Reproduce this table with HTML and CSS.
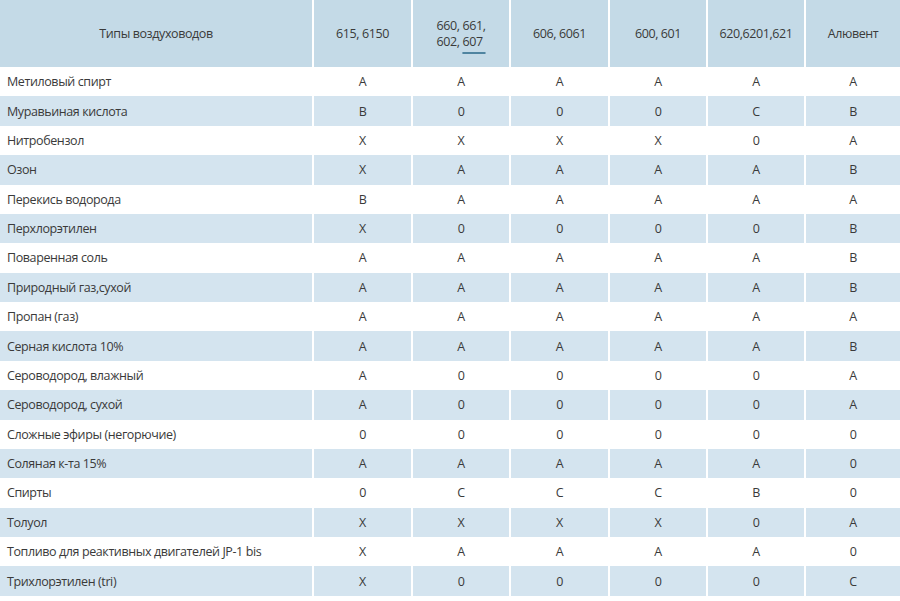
FILE: index.html
```html
<!DOCTYPE html>
<html lang="ru">
<head>
<meta charset="utf-8">
<title>Типы воздуховодов</title>
<link rel="stylesheet" href="styles.css">
</head>
<body>
<table class="chem">
  <colgroup>
    <col class="c-name"><col class="c-a"><col class="c-b"><col class="c-a"><col class="c-b"><col class="c-b"><col class="c-last">
  </colgroup>
  <thead>
    <tr>
      <th>Типы воздуховодов</th>
      <th>615, 6150</th>
      <th>660, 661,<br>602, <span class="mark">607&nbsp;</span></th>
      <th>606, 6061</th>
      <th>600, 601</th>
      <th>620,6201,621</th>
      <th>Алювент</th>
    </tr>
  </thead>
  <tbody>
    <tr><td>Метиловый спирт</td><td>A</td><td>A</td><td>A</td><td>A</td><td>A</td><td>A</td></tr>
    <tr><td>Муравьиная кислота</td><td>B</td><td>0</td><td>0</td><td>0</td><td>C</td><td>B</td></tr>
    <tr><td>Нитробензол</td><td>X</td><td>X</td><td>X</td><td>X</td><td>0</td><td>A</td></tr>
    <tr><td>Озон</td><td>X</td><td>A</td><td>A</td><td>A</td><td>A</td><td>B</td></tr>
    <tr><td>Перекись водорода</td><td>B</td><td>A</td><td>A</td><td>A</td><td>A</td><td>A</td></tr>
    <tr><td>Перхлорэтилен</td><td>X</td><td>0</td><td>0</td><td>0</td><td>0</td><td>B</td></tr>
    <tr><td>Поваренная соль</td><td>A</td><td>A</td><td>A</td><td>A</td><td>A</td><td>B</td></tr>
    <tr><td>Природный газ,сухой</td><td>A</td><td>A</td><td>A</td><td>A</td><td>A</td><td>B</td></tr>
    <tr><td>Пропан (газ)</td><td>A</td><td>A</td><td>A</td><td>A</td><td>A</td><td>A</td></tr>
    <tr><td>Серная кислота 10%</td><td>A</td><td>A</td><td>A</td><td>A</td><td>A</td><td>B</td></tr>
    <tr><td>Сероводород, влажный</td><td>A</td><td>0</td><td>0</td><td>0</td><td>0</td><td>A</td></tr>
    <tr><td>Сероводород, сухой</td><td>A</td><td>0</td><td>0</td><td>0</td><td>0</td><td>A</td></tr>
    <tr><td>Сложные эфиры (негорючие)</td><td>0</td><td>0</td><td>0</td><td>0</td><td>0</td><td>0</td></tr>
    <tr><td>Соляная к-та 15%</td><td>A</td><td>A</td><td>A</td><td>A</td><td>A</td><td>0</td></tr>
    <tr><td>Спирты</td><td>0</td><td>C</td><td>C</td><td>C</td><td>B</td><td>0</td></tr>
    <tr><td>Толуол</td><td>X</td><td>X</td><td>X</td><td>X</td><td>0</td><td>A</td></tr>
    <tr><td>Топливо для реактивных двигателей JP-1 bis</td><td>X</td><td>A</td><td>A</td><td>A</td><td>A</td><td>0</td></tr>
    <tr><td>Трихлорэтилен (tri)</td><td>X</td><td>0</td><td>0</td><td>0</td><td>0</td><td>C</td></tr>
  </tbody>
</table>
</body>
</html>
```
FILE: styles.css
```css
html, body {
  margin: 0;
  padding: 0;
  background: #ffffff;
}

.chem {
  width: 900px;
  table-layout: fixed;
  border-collapse: separate;
  border-spacing: 0;
  font-family: "Open Sans", "Noto Sans", sans-serif;
  font-size: 12.5px;
  letter-spacing: -0.4px;
  color: #3a3a3a;
}

.c-name { width: 312px; }
.c-a { width: 99px; }
.c-b { width: 98px; }
.c-last { width: 96px; }

.chem th,
.chem td {
  padding: 0;
  text-align: center;
  vertical-align: middle;
  border-left: 2px solid #ffffff;
}

.chem th:first-child,
.chem td:first-child {
  border-left: 0;
}

.chem thead th {
  height: 67px;
  background: #c4dae7;
  font-weight: normal;
  line-height: 16px;
}

.chem tbody tr {
  height: 29.39px;
}

.chem tbody td:first-child {
  text-align: left;
  padding-left: 7px;
}

.chem tbody tr:nth-child(even) td {
  background: #d4e4ef;
}

.mark {
  text-decoration: underline;
  text-decoration-color: #4f84a0;
  text-decoration-thickness: 2px;
  text-underline-offset: 6px;
}
```
